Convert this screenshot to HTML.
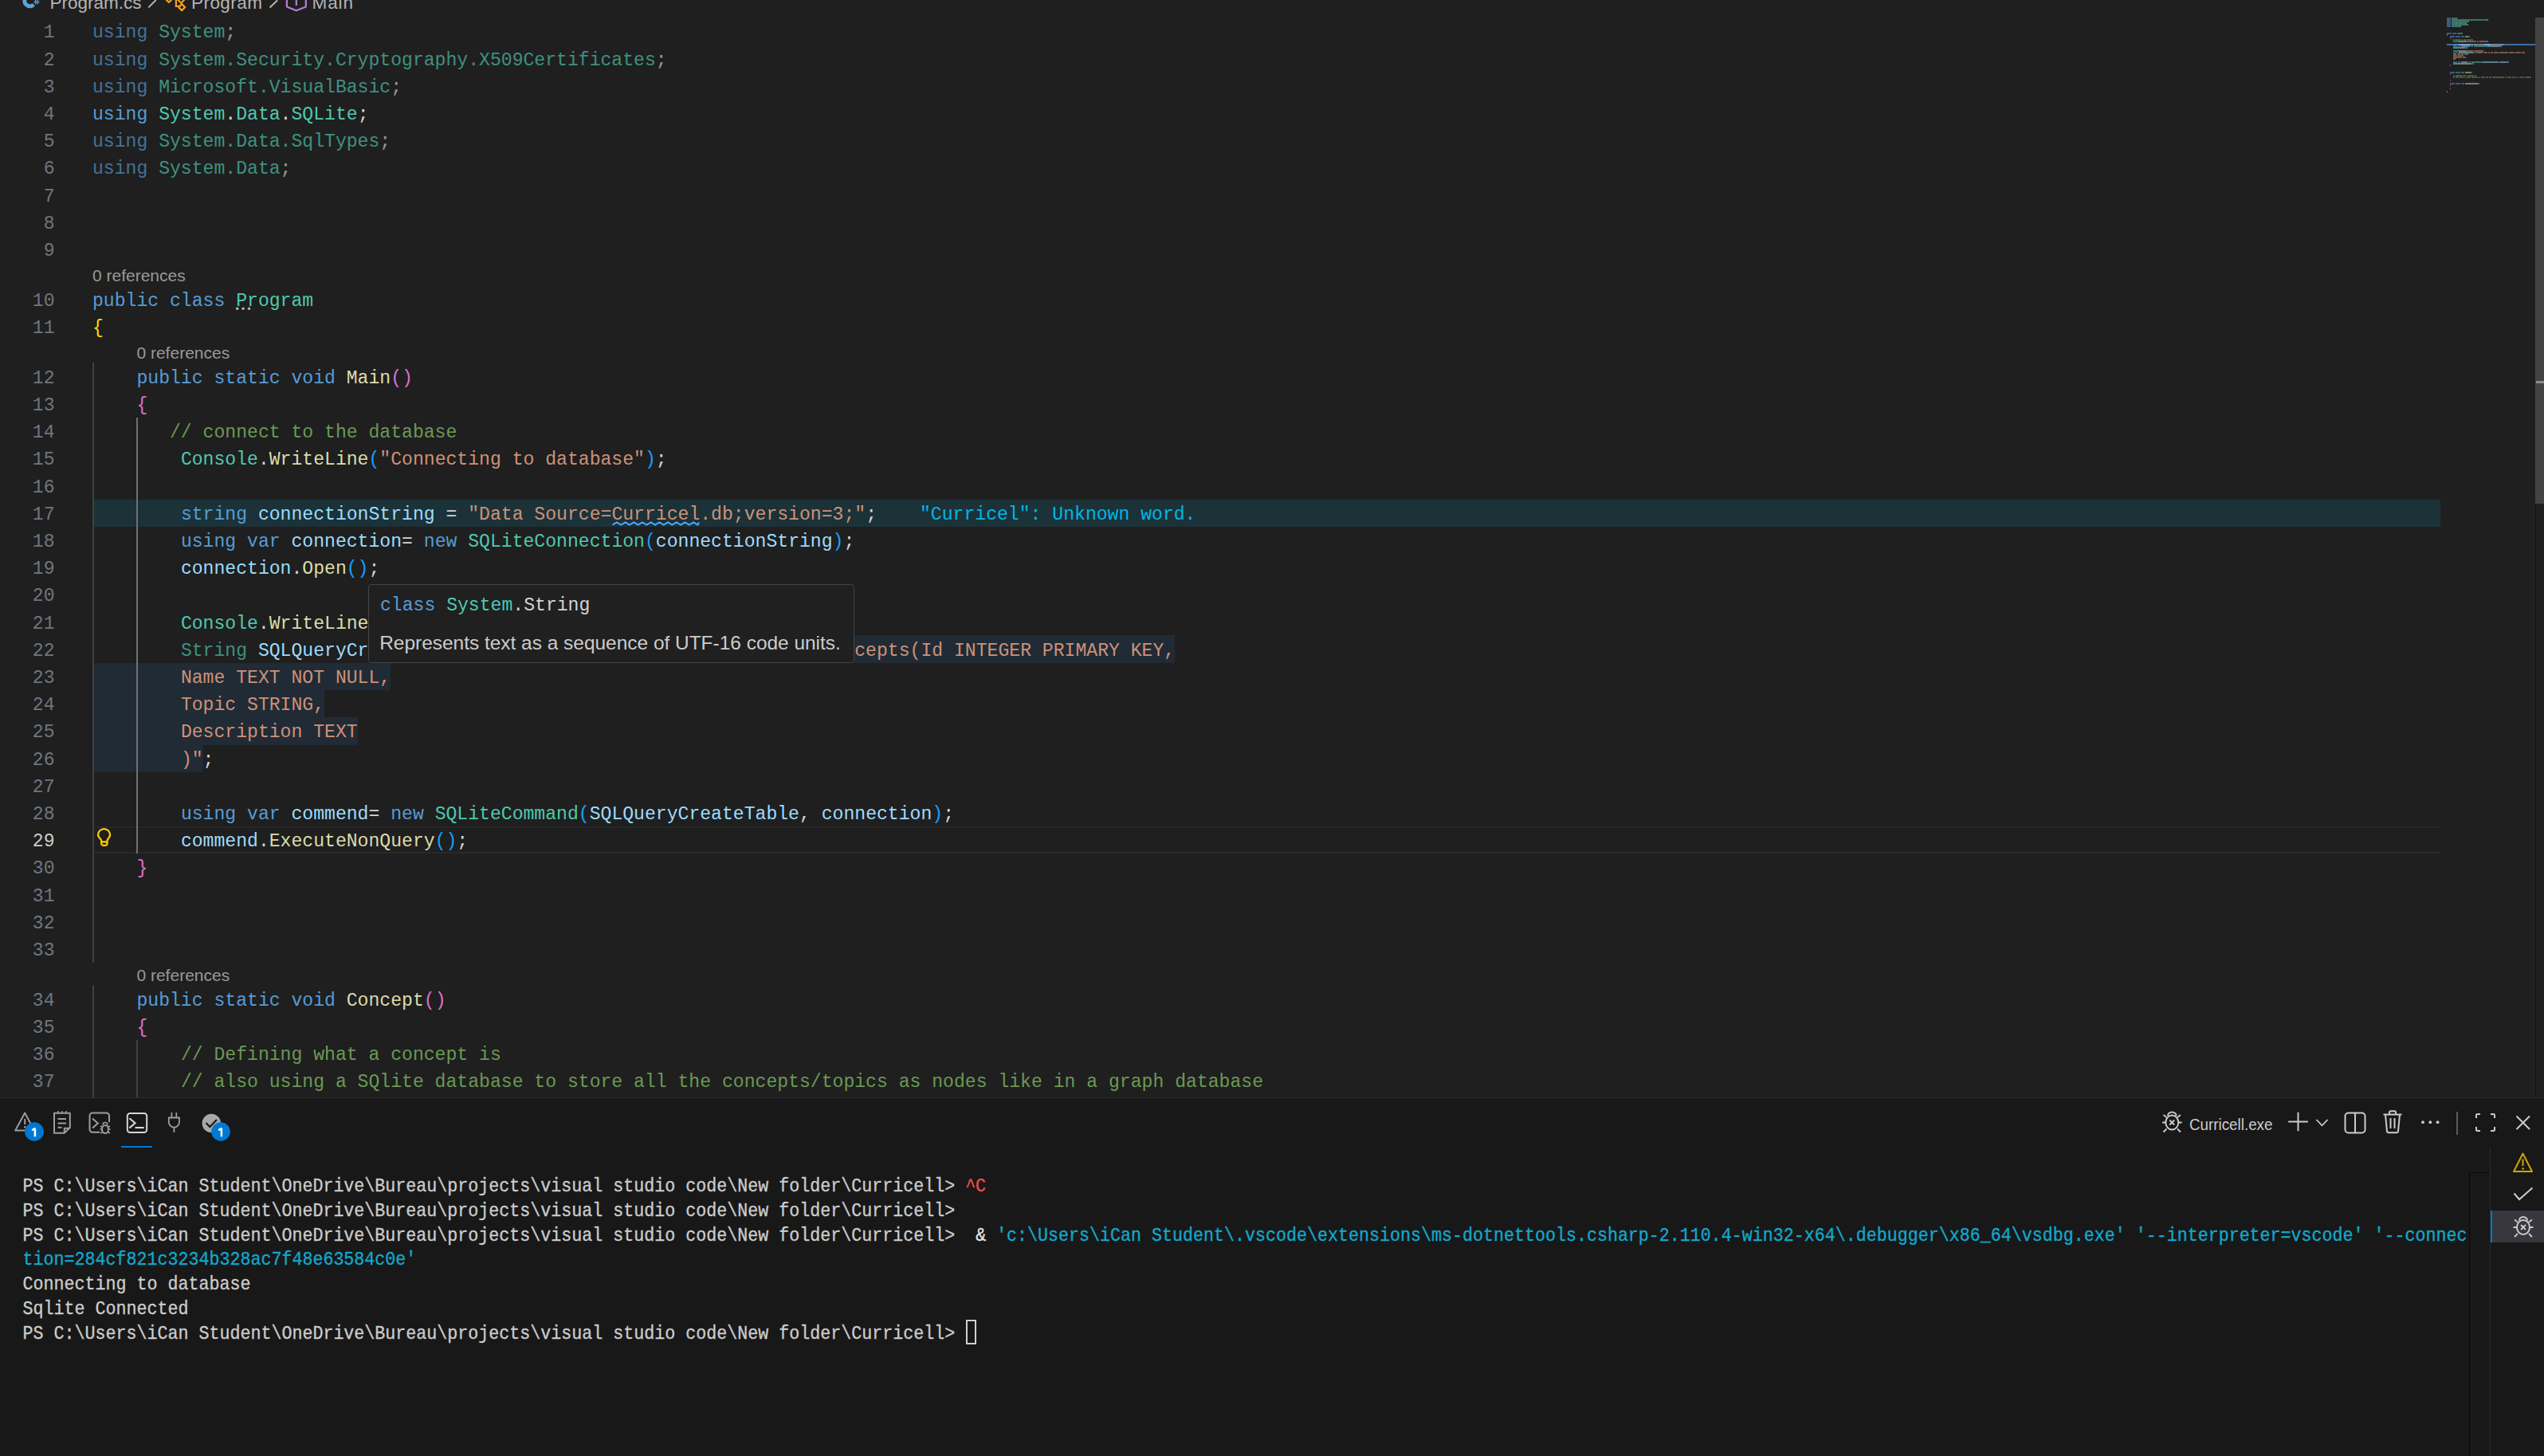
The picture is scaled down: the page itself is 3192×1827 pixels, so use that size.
<!DOCTYPE html><html><head><meta charset="utf-8"><style>
*{margin:0;padding:0;box-sizing:border-box}
html,body{width:3192px;height:1827px;overflow:hidden;background:#1F1F1F}
body{position:relative;font-family:"Liberation Sans",sans-serif}
.a{position:absolute}
svg{position:absolute;overflow:visible}
#ed{position:absolute;left:0;top:0;width:3192px;height:1377px;overflow:hidden;background:#1F1F1F}
.code{position:absolute;left:0;height:34.20px;line-height:34.20px;font-family:"Liberation Mono",monospace;font-size:23.10px;white-space:pre;}
.ln{position:absolute;left:0;width:68.5px;text-align:right;font-family:"Liberation Mono",monospace;font-size:23.10px;white-space:pre;color:#6E7681;line-height:34.20px;height:34.20px}
.cl{position:absolute;font-family:"Liberation Sans",sans-serif;font-size:21px;color:#999999;white-space:pre;line-height:28.6px}
.g{position:absolute;width:2px;background:#404040}
.term{position:absolute;left:28.5px;font-family:"Liberation Mono",monospace;font-size:21.66px;white-space:pre;color:#CCCCCC;line-height:30.8px;height:30.8px;transform:scaleY(1.08);transform-origin:0 20px;-webkit-text-stroke:0.3px}
.mm{position:absolute;height:2px;opacity:0.5}
</style></head><body>
<div id="ed">

<div class="a" style="left:116px;top:626.90px;width:2946px;height:34px;background:#1B3238"></div>
<div class="a" style="left:1071px;top:797.40px;width:403.28px;height:34.20px;background:#212B35"></div>
<div class="a" style="left:116px;top:831.60px;width:374.22px;height:34.70px;background:#212B35"></div>
<div class="a" style="left:116px;top:865.80px;width:291.06px;height:34.70px;background:#212B35"></div>
<div class="a" style="left:116px;top:900.00px;width:332.64px;height:34.70px;background:#212B35"></div>
<div class="a" style="left:116px;top:934.20px;width:138.60px;height:34.70px;background:#212B35"></div>
<div class="a" style="left:116px;top:1036.80px;width:2946px;height:34.20px;border-top:2px solid #282828;border-bottom:2px solid #282828"></div>
<div class="g" style="left:116.00px;top:455.40px;height:752.40px;background:#404040"></div>
<div class="g" style="left:116.00px;top:1236.40px;height:171.00px;background:#404040"></div>
<div class="g" style="left:171.00px;top:523.80px;height:547.20px;background:#707070"></div>
<div class="g" style="left:171.00px;top:1304.80px;height:102.60px;background:#404040"></div>
<div class="ln" style="top:24.30px;color:#6E7681">1</div>
<div class="ln" style="top:58.50px;color:#6E7681">2</div>
<div class="ln" style="top:92.70px;color:#6E7681">3</div>
<div class="ln" style="top:126.90px;color:#6E7681">4</div>
<div class="ln" style="top:161.10px;color:#6E7681">5</div>
<div class="ln" style="top:195.30px;color:#6E7681">6</div>
<div class="ln" style="top:229.50px;color:#6E7681">7</div>
<div class="ln" style="top:263.70px;color:#6E7681">8</div>
<div class="ln" style="top:297.90px;color:#6E7681">9</div>
<div class="ln" style="top:360.70px;color:#6E7681">10</div>
<div class="ln" style="top:394.90px;color:#6E7681">11</div>
<div class="ln" style="top:457.70px;color:#6E7681">12</div>
<div class="ln" style="top:491.90px;color:#6E7681">13</div>
<div class="ln" style="top:526.10px;color:#6E7681">14</div>
<div class="ln" style="top:560.30px;color:#6E7681">15</div>
<div class="ln" style="top:594.50px;color:#6E7681">16</div>
<div class="ln" style="top:628.70px;color:#6E7681">17</div>
<div class="ln" style="top:662.90px;color:#6E7681">18</div>
<div class="ln" style="top:697.10px;color:#6E7681">19</div>
<div class="ln" style="top:731.30px;color:#6E7681">20</div>
<div class="ln" style="top:765.50px;color:#6E7681">21</div>
<div class="ln" style="top:799.70px;color:#6E7681">22</div>
<div class="ln" style="top:833.90px;color:#6E7681">23</div>
<div class="ln" style="top:868.10px;color:#6E7681">24</div>
<div class="ln" style="top:902.30px;color:#6E7681">25</div>
<div class="ln" style="top:936.50px;color:#6E7681">26</div>
<div class="ln" style="top:970.70px;color:#6E7681">27</div>
<div class="ln" style="top:1004.90px;color:#6E7681">28</div>
<div class="ln" style="top:1039.10px;color:#CCCCCC">29</div>
<div class="ln" style="top:1073.30px;color:#6E7681">30</div>
<div class="ln" style="top:1107.50px;color:#6E7681">31</div>
<div class="ln" style="top:1141.70px;color:#6E7681">32</div>
<div class="ln" style="top:1175.90px;color:#6E7681">33</div>
<div class="ln" style="top:1238.70px;color:#6E7681">34</div>
<div class="ln" style="top:1272.90px;color:#6E7681">35</div>
<div class="ln" style="top:1307.10px;color:#6E7681">36</div>
<div class="ln" style="top:1341.30px;color:#6E7681">37</div>
<div class="ln" style="top:1375.50px;color:#6E7681">38</div>
<div class="code" style="left:116.00px;top:24.30px;opacity:0.667;"><span style="color:#569CD6">using</span><span style="color:#D4D4D4"> </span><span style="color:#4EC9B0">System</span><span style="color:#D4D4D4">;</span></div>
<div class="code" style="left:116.00px;top:58.50px;opacity:0.667;"><span style="color:#569CD6">using</span><span style="color:#D4D4D4"> </span><span style="color:#4EC9B0">System.Security.Cryptography.X509Certificates</span><span style="color:#D4D4D4">;</span></div>
<div class="code" style="left:116.00px;top:92.70px;opacity:0.667;"><span style="color:#569CD6">using</span><span style="color:#D4D4D4"> </span><span style="color:#4EC9B0">Microsoft.VisualBasic</span><span style="color:#D4D4D4">;</span></div>
<div class="code" style="left:116.00px;top:126.90px;"><span style="color:#569CD6">using</span><span style="color:#D4D4D4"> </span><span style="color:#4EC9B0">System</span><span style="color:#D4D4D4">.</span><span style="color:#4EC9B0">Data</span><span style="color:#D4D4D4">.</span><span style="color:#4EC9B0">SQLite</span><span style="color:#D4D4D4">;</span></div>
<div class="code" style="left:116.00px;top:161.10px;opacity:0.667;"><span style="color:#569CD6">using</span><span style="color:#D4D4D4"> </span><span style="color:#4EC9B0">System.Data.SqlTypes</span><span style="color:#D4D4D4">;</span></div>
<div class="code" style="left:116.00px;top:195.30px;opacity:0.667;"><span style="color:#569CD6">using</span><span style="color:#D4D4D4"> </span><span style="color:#4EC9B0">System.Data</span><span style="color:#D4D4D4">;</span></div>
<div class="code" style="left:116.00px;top:360.70px;"><span style="color:#569CD6">public</span><span style="color:#D4D4D4"> </span><span style="color:#569CD6">class</span><span style="color:#D4D4D4"> </span><span style="color:#4EC9B0">Program</span></div>
<div class="code" style="left:116.00px;top:394.90px;"><span style="color:#FFD700">{</span></div>
<div class="code" style="left:116.00px;top:457.70px;"><span style="color:#D4D4D4">    </span><span style="color:#569CD6">public</span><span style="color:#D4D4D4"> </span><span style="color:#569CD6">static</span><span style="color:#D4D4D4"> </span><span style="color:#569CD6">void</span><span style="color:#D4D4D4"> </span><span style="color:#DCDCAA">Main</span><span style="color:#DA70D6">()</span></div>
<div class="code" style="left:116.00px;top:491.90px;"><span style="color:#D4D4D4">    </span><span style="color:#DA70D6">{</span></div>
<div class="code" style="left:116.00px;top:526.10px;"><span style="color:#D4D4D4">       </span><span style="color:#6A9955">// connect to the database</span></div>
<div class="code" style="left:116.00px;top:560.30px;"><span style="color:#D4D4D4">        </span><span style="color:#4EC9B0">Console</span><span style="color:#D4D4D4">.</span><span style="color:#DCDCAA">WriteLine</span><span style="color:#179FFF">(</span><span style="color:#CE9178">&quot;Connecting to database&quot;</span><span style="color:#179FFF">)</span><span style="color:#D4D4D4">;</span></div>
<div class="code" style="left:116.00px;top:628.70px;"><span style="color:#D4D4D4">        </span><span style="color:#569CD6">string</span><span style="color:#D4D4D4"> </span><span style="color:#9CDCFE">connectionString</span><span style="color:#D4D4D4"> = </span><span style="color:#CE9178">&quot;Data Source=Curricel.db;version=3;&quot;</span><span style="color:#D4D4D4">;</span></div>
<div class="code" style="left:116.00px;top:662.90px;"><span style="color:#D4D4D4">        </span><span style="color:#569CD6">using</span><span style="color:#D4D4D4"> </span><span style="color:#569CD6">var</span><span style="color:#D4D4D4"> </span><span style="color:#9CDCFE">connection</span><span style="color:#D4D4D4">= </span><span style="color:#569CD6">new</span><span style="color:#D4D4D4"> </span><span style="color:#4EC9B0">SQLiteConnection</span><span style="color:#179FFF">(</span><span style="color:#9CDCFE">connectionString</span><span style="color:#179FFF">)</span><span style="color:#D4D4D4">;</span></div>
<div class="code" style="left:116.00px;top:697.10px;"><span style="color:#D4D4D4">        </span><span style="color:#9CDCFE">connection</span><span style="color:#D4D4D4">.</span><span style="color:#DCDCAA">Open</span><span style="color:#179FFF">()</span><span style="color:#D4D4D4">;</span></div>
<div class="code" style="left:116.00px;top:765.50px;"><span style="color:#D4D4D4">        </span><span style="color:#4EC9B0">Console</span><span style="color:#D4D4D4">.</span><span style="color:#DCDCAA">WriteLine</span><span style="color:#179FFF">(</span><span style="color:#CE9178">&quot;Sqlite Connected&quot;</span><span style="color:#179FFF">)</span><span style="color:#D4D4D4">;</span></div>
<div class="code" style="left:116.00px;top:799.70px;"><span style="color:#D4D4D4">        </span><span style="color:#3E9080">String</span><span style="color:#D4D4D4"> </span><span style="color:#9CDCFE">SQLQueryCreateTable</span><span style="color:#D4D4D4"> = </span><span style="color:#CE9178">@&quot;CREATE TABLE IF NOT EXISTS Concepts(Id INTEGER PRIMARY KEY,</span></div>
<div class="code" style="left:116.00px;top:833.90px;"><span style="color:#D4D4D4">        </span><span style="color:#CE9178">Name TEXT NOT NULL,</span></div>
<div class="code" style="left:116.00px;top:868.10px;"><span style="color:#D4D4D4">        </span><span style="color:#CE9178">Topic STRING,</span></div>
<div class="code" style="left:116.00px;top:902.30px;"><span style="color:#D4D4D4">        </span><span style="color:#CE9178">Description TEXT</span></div>
<div class="code" style="left:116.00px;top:936.50px;"><span style="color:#D4D4D4">        </span><span style="color:#CE9178">)&quot;</span><span style="color:#D4D4D4">;</span></div>
<div class="code" style="left:116.00px;top:1004.90px;"><span style="color:#D4D4D4">        </span><span style="color:#569CD6">using</span><span style="color:#D4D4D4"> </span><span style="color:#569CD6">var</span><span style="color:#D4D4D4"> </span><span style="color:#9CDCFE">commend</span><span style="color:#D4D4D4">= </span><span style="color:#569CD6">new</span><span style="color:#D4D4D4"> </span><span style="color:#4EC9B0">SQLiteCommand</span><span style="color:#179FFF">(</span><span style="color:#9CDCFE">SQLQueryCreateTable</span><span style="color:#D4D4D4">, </span><span style="color:#9CDCFE">connection</span><span style="color:#179FFF">)</span><span style="color:#D4D4D4">;</span></div>
<div class="code" style="left:116.00px;top:1039.10px;"><span style="color:#D4D4D4">        </span><span style="color:#9CDCFE">commend</span><span style="color:#D4D4D4">.</span><span style="color:#DCDCAA">ExecuteNonQuery</span><span style="color:#179FFF">()</span><span style="color:#D4D4D4">;</span></div>
<div class="code" style="left:116.00px;top:1073.30px;"><span style="color:#D4D4D4">    </span><span style="color:#DA70D6">}</span></div>
<div class="code" style="left:116.00px;top:1238.70px;"><span style="color:#D4D4D4">    </span><span style="color:#569CD6">public</span><span style="color:#D4D4D4"> </span><span style="color:#569CD6">static</span><span style="color:#D4D4D4"> </span><span style="color:#569CD6">void</span><span style="color:#D4D4D4"> </span><span style="color:#DCDCAA">Concept</span><span style="color:#DA70D6">()</span></div>
<div class="code" style="left:116.00px;top:1272.90px;"><span style="color:#D4D4D4">    </span><span style="color:#DA70D6">{</span></div>
<div class="code" style="left:116.00px;top:1307.10px;"><span style="color:#D4D4D4">        </span><span style="color:#6A9955">// Defining what a concept is</span></div>
<div class="code" style="left:116.00px;top:1341.30px;"><span style="color:#D4D4D4">        </span><span style="color:#6A9955">// also using a SQlite database to store all the concepts/topics as nodes like in a graph database</span></div>
<div class="cl" style="left:116.00px;top:331.80px">0 references</div>
<div class="cl" style="left:171.44px;top:428.80px">0 references</div>
<div class="cl" style="left:171.44px;top:1209.80px">0 references</div>
<div class="code" style="left:1154.00px;top:628.70px;color:#00B7E4">"Curricel": Unknown word.</div>
<svg style="left:0;top:0" width="3192" height="1377"><path d="M768.5 658.6 L773.9 655.4 L779.2 658.6 L784.6 655.4 L789.9 658.6 L795.3 655.4 L800.6 658.6 L806.0 655.4 L811.3 658.6 L816.7 655.4 L822.0 658.6 L827.4 655.4 L832.7 658.6 L838.1 655.4 L843.4 658.6 L848.8 655.4 L854.1 658.6 L859.5 655.4 L864.8 658.6 L870.2 655.4 L875.5 658.6 L877.0 655.4" fill="none" stroke="#4FA6FF" stroke-width="1.9"/></svg>
<svg style="left:0;top:0" width="3192" height="1377"><circle cx="297.7" cy="387.2" r="1.8" fill="#B0B0B0"/><circle cx="305.1" cy="387.2" r="1.8" fill="#B0B0B0"/><circle cx="312.5" cy="387.2" r="1.8" fill="#B0B0B0"/></svg>
<svg style="left:110px;top:1030px" width="40" height="40"><path d="M17.2 26.3 V25 C17.2 22.6 13 21 13 17.65 A7.55 7.55 0 0 1 28.1 17.65 C28.1 21 24.5 22.6 24.5 25 V26.3" fill="none" stroke="#FFCC00" stroke-width="2.3" stroke-linejoin="round"/><path d="M17.2 26.3 H24.5 V28.5 A2.4 2.4 0 0 1 22.1 30.9 H19.6 A2.4 2.4 0 0 1 17.2 28.5 Z" fill="none" stroke="#FFCC00" stroke-width="2.3" stroke-linejoin="round"/></svg>
<div class="a" style="left:62.5px;top:-9px;font-size:22.5px;color:#B4B4B4;white-space:pre;line-height:26px;letter-spacing:0.00px">Program.cs</div>
<div class="a" style="left:240.0px;top:-9px;font-size:22.5px;color:#B4B4B4;white-space:pre;line-height:26px;letter-spacing:0.45px">Program</div>
<div class="a" style="left:391.5px;top:-9px;font-size:22.5px;color:#B4B4B4;white-space:pre;line-height:26px;letter-spacing:0.90px">Main</div>
<svg style="left:0;top:0" width="460" height="22"><path d="M42.4 5.8 A6.8 6.8 0 1 1 42.4 -3.8" fill="none" stroke="#5AA5D3" stroke-width="5"/><path d="M44.6 -3 V5.5 M47.2 -3 V5.5 M42.5 -0.3 H49.5 M42.5 2.6 H49.5" stroke="#5AA5D3" stroke-width="1.3"/><path d="M186.3 9.4 L195.7 0 M338.5 9.4 L348.2 0.3" stroke="#B4B4B4" stroke-width="2"/><path d="M211.8 -5 L215.8 -1 L211.8 3 L207.8 -1 Z M227.2 -4.2 L231.2 -0.2 L227.2 3.8 L223.2 -0.2 Z M228.1 5.1 L232.1 9.1 L228.1 13.1 L224.1 9.1 Z" fill="none" stroke="#EE9D28" stroke-width="2.2" stroke-linejoin="round"/><path d="M220.9 -2 V7.9 H225" fill="none" stroke="#EE9D28" stroke-width="2.2"/><path d="M359.9 -2 V8.5 L371.8 13.3 L383.8 8.5 V-2 M371.8 -2 V7" fill="none" stroke="#B180D7" stroke-width="2.2" stroke-linejoin="round"/></svg>
<div class="a" style="left:3070px;top:54.9px;width:111px;height:2.2px;background:#3A6EA5"></div>
<div class="mm" style="left:3070px;top:22.0px;width:5px;background:#569CD6"></div>
<div class="mm" style="left:3076px;top:22.0px;width:6px;background:#4EC9B0"></div>
<div class="mm" style="left:3082px;top:22.0px;width:1px;background:#D4D4D4"></div>
<div class="mm" style="left:3070px;top:24.0px;width:5px;background:#569CD6"></div>
<div class="mm" style="left:3076px;top:24.0px;width:45px;background:#4EC9B0"></div>
<div class="mm" style="left:3121px;top:24.0px;width:1px;background:#D4D4D4"></div>
<div class="mm" style="left:3070px;top:26.0px;width:5px;background:#569CD6"></div>
<div class="mm" style="left:3076px;top:26.0px;width:21px;background:#4EC9B0"></div>
<div class="mm" style="left:3097px;top:26.0px;width:1px;background:#D4D4D4"></div>
<div class="mm" style="left:3070px;top:28.0px;width:5px;background:#569CD6"></div>
<div class="mm" style="left:3076px;top:28.0px;width:6px;background:#4EC9B0"></div>
<div class="mm" style="left:3082px;top:28.0px;width:1px;background:#D4D4D4"></div>
<div class="mm" style="left:3083px;top:28.0px;width:4px;background:#4EC9B0"></div>
<div class="mm" style="left:3087px;top:28.0px;width:1px;background:#D4D4D4"></div>
<div class="mm" style="left:3088px;top:28.0px;width:6px;background:#4EC9B0"></div>
<div class="mm" style="left:3094px;top:28.0px;width:1px;background:#D4D4D4"></div>
<div class="mm" style="left:3070px;top:30.0px;width:5px;background:#569CD6"></div>
<div class="mm" style="left:3076px;top:30.0px;width:20px;background:#4EC9B0"></div>
<div class="mm" style="left:3096px;top:30.0px;width:1px;background:#D4D4D4"></div>
<div class="mm" style="left:3070px;top:32.0px;width:5px;background:#569CD6"></div>
<div class="mm" style="left:3076px;top:32.0px;width:11px;background:#4EC9B0"></div>
<div class="mm" style="left:3087px;top:32.0px;width:1px;background:#D4D4D4"></div>
<div class="mm" style="left:3070px;top:41.0px;width:6px;background:#569CD6"></div>
<div class="mm" style="left:3077px;top:41.0px;width:5px;background:#569CD6"></div>
<div class="mm" style="left:3083px;top:41.0px;width:7px;background:#4EC9B0"></div>
<div class="mm" style="left:3070px;top:43.0px;width:1px;background:#FFD700"></div>
<div class="mm" style="left:3074px;top:45.0px;width:6px;background:#569CD6"></div>
<div class="mm" style="left:3081px;top:45.0px;width:6px;background:#569CD6"></div>
<div class="mm" style="left:3088px;top:45.0px;width:4px;background:#569CD6"></div>
<div class="mm" style="left:3093px;top:45.0px;width:4px;background:#DCDCAA"></div>
<div class="mm" style="left:3097px;top:45.0px;width:2px;background:#DA70D6"></div>
<div class="mm" style="left:3074px;top:47.0px;width:1px;background:#DA70D6"></div>
<div class="mm" style="left:3077px;top:49.0px;width:2px;background:#6A9955"></div>
<div class="mm" style="left:3080px;top:49.0px;width:7px;background:#6A9955"></div>
<div class="mm" style="left:3088px;top:49.0px;width:2px;background:#6A9955"></div>
<div class="mm" style="left:3091px;top:49.0px;width:3px;background:#6A9955"></div>
<div class="mm" style="left:3095px;top:49.0px;width:8px;background:#6A9955"></div>
<div class="mm" style="left:3078px;top:51.0px;width:7px;background:#4EC9B0"></div>
<div class="mm" style="left:3085px;top:51.0px;width:1px;background:#D4D4D4"></div>
<div class="mm" style="left:3086px;top:51.0px;width:9px;background:#DCDCAA"></div>
<div class="mm" style="left:3095px;top:51.0px;width:1px;background:#179FFF"></div>
<div class="mm" style="left:3096px;top:51.0px;width:11px;background:#CE9178"></div>
<div class="mm" style="left:3108px;top:51.0px;width:2px;background:#CE9178"></div>
<div class="mm" style="left:3111px;top:51.0px;width:9px;background:#CE9178"></div>
<div class="mm" style="left:3120px;top:51.0px;width:1px;background:#179FFF"></div>
<div class="mm" style="left:3121px;top:51.0px;width:1px;background:#D4D4D4"></div>
<div class="mm" style="left:3078px;top:55.0px;width:6px;background:#569CD6"></div>
<div class="mm" style="left:3085px;top:55.0px;width:16px;background:#9CDCFE"></div>
<div class="mm" style="left:3102px;top:55.0px;width:1px;background:#D4D4D4"></div>
<div class="mm" style="left:3104px;top:55.0px;width:5px;background:#CE9178"></div>
<div class="mm" style="left:3110px;top:55.0px;width:30px;background:#CE9178"></div>
<div class="mm" style="left:3140px;top:55.0px;width:1px;background:#D4D4D4"></div>
<div class="mm" style="left:3078px;top:57.0px;width:5px;background:#569CD6"></div>
<div class="mm" style="left:3084px;top:57.0px;width:3px;background:#569CD6"></div>
<div class="mm" style="left:3088px;top:57.0px;width:10px;background:#9CDCFE"></div>
<div class="mm" style="left:3098px;top:57.0px;width:1px;background:#D4D4D4"></div>
<div class="mm" style="left:3100px;top:57.0px;width:3px;background:#569CD6"></div>
<div class="mm" style="left:3104px;top:57.0px;width:16px;background:#4EC9B0"></div>
<div class="mm" style="left:3120px;top:57.0px;width:1px;background:#179FFF"></div>
<div class="mm" style="left:3121px;top:57.0px;width:16px;background:#9CDCFE"></div>
<div class="mm" style="left:3137px;top:57.0px;width:1px;background:#179FFF"></div>
<div class="mm" style="left:3138px;top:57.0px;width:1px;background:#D4D4D4"></div>
<div class="mm" style="left:3078px;top:59.0px;width:10px;background:#9CDCFE"></div>
<div class="mm" style="left:3088px;top:59.0px;width:1px;background:#D4D4D4"></div>
<div class="mm" style="left:3089px;top:59.0px;width:4px;background:#DCDCAA"></div>
<div class="mm" style="left:3093px;top:59.0px;width:2px;background:#179FFF"></div>
<div class="mm" style="left:3095px;top:59.0px;width:1px;background:#D4D4D4"></div>
<div class="mm" style="left:3078px;top:63.0px;width:7px;background:#4EC9B0"></div>
<div class="mm" style="left:3085px;top:63.0px;width:1px;background:#D4D4D4"></div>
<div class="mm" style="left:3086px;top:63.0px;width:9px;background:#DCDCAA"></div>
<div class="mm" style="left:3095px;top:63.0px;width:1px;background:#179FFF"></div>
<div class="mm" style="left:3096px;top:63.0px;width:7px;background:#CE9178"></div>
<div class="mm" style="left:3104px;top:63.0px;width:10px;background:#CE9178"></div>
<div class="mm" style="left:3114px;top:63.0px;width:1px;background:#179FFF"></div>
<div class="mm" style="left:3115px;top:63.0px;width:1px;background:#D4D4D4"></div>
<div class="mm" style="left:3078px;top:65.0px;width:6px;background:#3E9080"></div>
<div class="mm" style="left:3085px;top:65.0px;width:19px;background:#9CDCFE"></div>
<div class="mm" style="left:3105px;top:65.0px;width:1px;background:#D4D4D4"></div>
<div class="mm" style="left:3107px;top:65.0px;width:8px;background:#CE9178"></div>
<div class="mm" style="left:3116px;top:65.0px;width:5px;background:#CE9178"></div>
<div class="mm" style="left:3122px;top:65.0px;width:2px;background:#CE9178"></div>
<div class="mm" style="left:3125px;top:65.0px;width:3px;background:#CE9178"></div>
<div class="mm" style="left:3129px;top:65.0px;width:6px;background:#CE9178"></div>
<div class="mm" style="left:3136px;top:65.0px;width:11px;background:#CE9178"></div>
<div class="mm" style="left:3148px;top:65.0px;width:7px;background:#CE9178"></div>
<div class="mm" style="left:3156px;top:65.0px;width:7px;background:#CE9178"></div>
<div class="mm" style="left:3164px;top:65.0px;width:4px;background:#CE9178"></div>
<div class="mm" style="left:3078px;top:67.0px;width:4px;background:#CE9178"></div>
<div class="mm" style="left:3083px;top:67.0px;width:4px;background:#CE9178"></div>
<div class="mm" style="left:3088px;top:67.0px;width:3px;background:#CE9178"></div>
<div class="mm" style="left:3092px;top:67.0px;width:5px;background:#CE9178"></div>
<div class="mm" style="left:3078px;top:69.0px;width:5px;background:#CE9178"></div>
<div class="mm" style="left:3084px;top:69.0px;width:7px;background:#CE9178"></div>
<div class="mm" style="left:3078px;top:71.0px;width:11px;background:#CE9178"></div>
<div class="mm" style="left:3090px;top:71.0px;width:4px;background:#CE9178"></div>
<div class="mm" style="left:3078px;top:73.0px;width:2px;background:#CE9178"></div>
<div class="mm" style="left:3080px;top:73.0px;width:1px;background:#D4D4D4"></div>
<div class="mm" style="left:3078px;top:77.0px;width:5px;background:#569CD6"></div>
<div class="mm" style="left:3084px;top:77.0px;width:3px;background:#569CD6"></div>
<div class="mm" style="left:3088px;top:77.0px;width:7px;background:#9CDCFE"></div>
<div class="mm" style="left:3095px;top:77.0px;width:1px;background:#D4D4D4"></div>
<div class="mm" style="left:3097px;top:77.0px;width:3px;background:#569CD6"></div>
<div class="mm" style="left:3101px;top:77.0px;width:13px;background:#4EC9B0"></div>
<div class="mm" style="left:3114px;top:77.0px;width:1px;background:#179FFF"></div>
<div class="mm" style="left:3115px;top:77.0px;width:19px;background:#9CDCFE"></div>
<div class="mm" style="left:3134px;top:77.0px;width:1px;background:#D4D4D4"></div>
<div class="mm" style="left:3136px;top:77.0px;width:10px;background:#9CDCFE"></div>
<div class="mm" style="left:3146px;top:77.0px;width:1px;background:#179FFF"></div>
<div class="mm" style="left:3147px;top:77.0px;width:1px;background:#D4D4D4"></div>
<div class="mm" style="left:3078px;top:79.0px;width:7px;background:#9CDCFE"></div>
<div class="mm" style="left:3085px;top:79.0px;width:1px;background:#D4D4D4"></div>
<div class="mm" style="left:3086px;top:79.0px;width:15px;background:#DCDCAA"></div>
<div class="mm" style="left:3101px;top:79.0px;width:2px;background:#179FFF"></div>
<div class="mm" style="left:3103px;top:79.0px;width:1px;background:#D4D4D4"></div>
<div class="mm" style="left:3074px;top:81.0px;width:1px;background:#DA70D6"></div>
<div class="mm" style="left:3074px;top:90.0px;width:6px;background:#569CD6"></div>
<div class="mm" style="left:3081px;top:90.0px;width:6px;background:#569CD6"></div>
<div class="mm" style="left:3088px;top:90.0px;width:4px;background:#569CD6"></div>
<div class="mm" style="left:3093px;top:90.0px;width:7px;background:#DCDCAA"></div>
<div class="mm" style="left:3100px;top:90.0px;width:2px;background:#DA70D6"></div>
<div class="mm" style="left:3074px;top:92.0px;width:1px;background:#DA70D6"></div>
<div class="mm" style="left:3078px;top:94.0px;width:2px;background:#6A9955"></div>
<div class="mm" style="left:3081px;top:94.0px;width:8px;background:#6A9955"></div>
<div class="mm" style="left:3090px;top:94.0px;width:4px;background:#6A9955"></div>
<div class="mm" style="left:3095px;top:94.0px;width:1px;background:#6A9955"></div>
<div class="mm" style="left:3097px;top:94.0px;width:7px;background:#6A9955"></div>
<div class="mm" style="left:3105px;top:94.0px;width:2px;background:#6A9955"></div>
<div class="mm" style="left:3078px;top:96.0px;width:2px;background:#6A9955"></div>
<div class="mm" style="left:3081px;top:96.0px;width:4px;background:#6A9955"></div>
<div class="mm" style="left:3086px;top:96.0px;width:5px;background:#6A9955"></div>
<div class="mm" style="left:3092px;top:96.0px;width:1px;background:#6A9955"></div>
<div class="mm" style="left:3094px;top:96.0px;width:6px;background:#6A9955"></div>
<div class="mm" style="left:3101px;top:96.0px;width:8px;background:#6A9955"></div>
<div class="mm" style="left:3110px;top:96.0px;width:2px;background:#6A9955"></div>
<div class="mm" style="left:3113px;top:96.0px;width:5px;background:#6A9955"></div>
<div class="mm" style="left:3119px;top:96.0px;width:3px;background:#6A9955"></div>
<div class="mm" style="left:3123px;top:96.0px;width:3px;background:#6A9955"></div>
<div class="mm" style="left:3127px;top:96.0px;width:15px;background:#6A9955"></div>
<div class="mm" style="left:3143px;top:96.0px;width:2px;background:#6A9955"></div>
<div class="mm" style="left:3146px;top:96.0px;width:5px;background:#6A9955"></div>
<div class="mm" style="left:3152px;top:96.0px;width:4px;background:#6A9955"></div>
<div class="mm" style="left:3157px;top:96.0px;width:2px;background:#6A9955"></div>
<div class="mm" style="left:3160px;top:96.0px;width:1px;background:#6A9955"></div>
<div class="mm" style="left:3162px;top:96.0px;width:5px;background:#6A9955"></div>
<div class="mm" style="left:3168px;top:96.0px;width:8px;background:#6A9955"></div>
<div class="mm" style="left:3074px;top:100.0px;width:1px;background:#DA70D6"></div>
<div class="mm" style="left:3074px;top:104.0px;width:6px;background:#569CD6"></div>
<div class="mm" style="left:3081px;top:104.0px;width:6px;background:#569CD6"></div>
<div class="mm" style="left:3088px;top:104.0px;width:4px;background:#569CD6"></div>
<div class="mm" style="left:3093px;top:104.0px;width:16px;background:#DCDCAA"></div>
<div class="mm" style="left:3109px;top:104.0px;width:2px;background:#DA70D6"></div>
<div class="mm" style="left:3074px;top:106.0px;width:1px;background:#DA70D6"></div>
<div class="mm" style="left:3074px;top:110.0px;width:1px;background:#DA70D6"></div>
<div class="mm" style="left:3070px;top:114.0px;width:1px;background:#FFD700"></div>
<div class="a" style="left:3117px;top:54.9px;width:8px;height:2.2px;background:#6FA8E8"></div>
<div class="a" style="left:3181px;top:22px;width:11px;height:610px;background:#434343"></div>
<div class="a" style="left:3181px;top:632px;width:1px;height:745px;background:#111215"></div>
<div class="a" style="left:3182px;top:478px;width:10px;height:3px;background:#8B8B8B"></div>
<div class="a" style="left:461.5px;top:733px;width:610px;height:98.5px;background:#202020;border:1.8px solid #454545;border-radius:3.5px"></div>
<div class="code" style="left:477px;top:743.3px;color:#D4D4D4"><span style="color:#569CD6">class</span> <span style="color:#4EC9B0">System</span>.String</div>
<div class="a" style="left:476.2px;top:791.8px;font-size:24.45px;line-height:30px;color:#CCCCCC;white-space:pre">Represents text as a sequence of UTF-16 code units.</div>
</div>
<div class="a" style="left:0;top:1377px;width:3192px;height:450px;background:#181818"></div>
<div class="a" style="left:0;top:1377px;width:3192px;height:1.4px;background:#2B2B2B"></div>
<svg style="left:0;top:1380px" width="60" height="60"><path d="M31.2 16.5 L19.2 38.5 H43 Z" fill="none" stroke="#9D9D9D" stroke-width="2" stroke-linejoin="round"/><path d="M31.2 24 V31" stroke="#9D9D9D" stroke-width="2"/><circle cx="31.2" cy="34.3" r="1.2" fill="#9D9D9D"/></svg>
<svg style="left:60px;top:1385px" width="40" height="45"><path d="M8 11.8 h19.8 v18 l-7 7 h-12.8 z" fill="none" stroke="#9D9D9D" stroke-width="2" stroke-linejoin="round"/><path d="M20.8 36.8 v-6 h7" fill="none" stroke="#9D9D9D" stroke-width="2"/><path d="M12.5 19 h10.5 M12.5 24.5 h10.5 M12.5 29.7 h5" stroke="#9D9D9D" stroke-width="2"/><path d="M13 9 v3 M18 9 v3 M23 9 v3" stroke="#9D9D9D" stroke-width="1.6"/></svg>
<svg style="left:100px;top:1385px" width="50" height="45"><path d="M25 35.8 H16 a3.5 3.5 0 0 1 -3.5 -3.5 V15 a3.5 3.5 0 0 1 3.5 -3.5 H33.5 a3.5 3.5 0 0 1 3.5 3.5 V23" fill="none" stroke="#9D9D9D" stroke-width="2"/><path d="M16 18.4 L22.8 24.5 L16 30.5" fill="none" stroke="#9D9D9D" stroke-width="2"/><ellipse cx="32" cy="32" rx="4" ry="5" fill="none" stroke="#9D9D9D" stroke-width="2"/><path d="M29 26.5 a3 3 0 0 1 6 0 M26 28 l2.5 1.5 M38 28 l-2.5 1.5 M25.5 32 h2.5 M36 32 h2.5 M26 37 l2.5 -1.5 M38 37 l-2.5 -1.5" fill="none" stroke="#9D9D9D" stroke-width="1.6"/></svg>
<svg style="left:150px;top:1385px" width="45" height="45"><rect x="9.8" y="11.9" width="24.4" height="24.1" rx="3.5" fill="none" stroke="#D6D6D6" stroke-width="2"/><path d="M12.4 18.3 L19.5 24.2 L12.4 30.4" fill="none" stroke="#D6D6D6" stroke-width="2.1"/><path d="M19.5 30 H30.7" stroke="#D6D6D6" stroke-width="2.1"/></svg>
<div class="a" style="left:152px;top:1437.5px;width:39px;height:2px;background:#0078D4"></div>
<svg style="left:200px;top:1385px" width="40" height="45"><path d="M15.4 11 V17.5 M21.3 11 V17.5" stroke="#9D9D9D" stroke-width="1.8"/><path d="M11.8 17.5 H25 V23 a6.6 6.6 0 0 1 -13.2 0 Z" fill="none" stroke="#9D9D9D" stroke-width="1.8"/><path d="M18.4 29.6 V36" stroke="#9D9D9D" stroke-width="1.8"/></svg>
<svg style="left:240px;top:1385px" width="60" height="50"><circle cx="25.3" cy="24.5" r="11.8" fill="#A8A8A8"/><path d="M18.5 24 L23.3 29 L32 20" fill="none" stroke="#181818" stroke-width="2.2"/></svg>
<svg style="left:31.2px;top:1407.5px" width="24" height="24"><circle cx="12" cy="12" r="11.8" fill="#0078D4"/><path d="M9.2 10.2 L12.9 7.9 V18.2" fill="none" stroke="#FFFFFF" stroke-width="2.5" stroke-linejoin="bevel"/></svg>
<svg style="left:264.5px;top:1407.5px" width="24" height="24"><circle cx="12" cy="12" r="11.8" fill="#0078D4"/><path d="M9.2 10.2 L12.9 7.9 V18.2" fill="none" stroke="#FFFFFF" stroke-width="2.5" stroke-linejoin="bevel"/></svg>
<svg style="left:2705px;top:1385px" width="40" height="45"><ellipse cx="20.3" cy="23.5" rx="8" ry="9" fill="none" stroke="#CCCCCC" stroke-width="2"/><path d="M15 15 a5.3 4.5 0 0 1 10.6 0" fill="none" stroke="#CCCCCC" stroke-width="2"/><path d="M17.3 20.5 l6 6 M23.3 20.5 l-6 6" stroke="#CCCCCC" stroke-width="1.8"/><path d="M8 23.5 h4.3 M28.3 23.5 h4.3 M9.5 14 l4 3 M31 14 l-4 3 M9.5 35.5 l4 -4 M31 35.5 l-4 -4" stroke="#CCCCCC" stroke-width="1.8"/></svg>
<div class="a" style="left:2747px;top:1397px;font-size:21px;line-height:28px;color:#CCCCCC;white-space:pre;transform:scaleX(0.895);transform-origin:0 0">Curricell.exe</div>
<svg style="left:2860px;top:1385px" width="70" height="45"><path d="M23.5 10.8 V34.3 M11.2 22.6 H35.8" stroke="#CCCCCC" stroke-width="2"/><path d="M46.5 20 L53.5 27.3 L60.5 20" fill="none" stroke="#CCCCCC" stroke-width="1.8"/></svg>
<svg style="left:2935px;top:1385px" width="40" height="45"><rect x="7.5" y="11.5" width="25" height="25" rx="4" fill="none" stroke="#CCCCCC" stroke-width="2"/><path d="M20 11.5 V36.5" stroke="#CCCCCC" stroke-width="2"/></svg>
<svg style="left:2985px;top:1385px" width="40" height="45"><path d="M5.5 13.5 H28.5 M13 13.5 V10.8 a1.5 1.5 0 0 1 1.5 -1.5 h5 a1.5 1.5 0 0 1 1.5 1.5 V13.5" fill="none" stroke="#CCCCCC" stroke-width="2"/><path d="M8 13.5 L10 34.5 a2 2 0 0 0 2 1.8 H22 a2 2 0 0 0 2 -1.8 L26 13.5" fill="none" stroke="#CCCCCC" stroke-width="2"/><path d="M14.5 18 V31 M19.5 18 V31" stroke="#CCCCCC" stroke-width="2"/></svg>
<svg style="left:3030px;top:1385px" width="40" height="45"><circle cx="10.0" cy="23.2" r="1.9" fill="#CCCCCC"/><circle cx="19.3" cy="23.2" r="1.9" fill="#CCCCCC"/><circle cx="28.6" cy="23.2" r="1.9" fill="#CCCCCC"/></svg>
<div class="a" style="left:3082px;top:1395px;width:2px;height:29px;background:#5A5A5A"></div>
<svg style="left:3100px;top:1385px" width="40" height="45"><path d="M7 18 V14.5 a1.5 1.5 0 0 1 1.5 -1.5 H12 M25 13 H28.5 a1.5 1.5 0 0 1 1.5 1.5 V18 M30 29 V32.5 a1.5 1.5 0 0 1 -1.5 1.5 H25 M12 34 H8.5 a1.5 1.5 0 0 1 -1.5 -1.5 V29" fill="none" stroke="#CCCCCC" stroke-width="2"/></svg>
<svg style="left:3150px;top:1385px" width="40" height="45"><path d="M7.5 15.5 L24 32 M24 15.5 L7.5 32" stroke="#CCCCCC" stroke-width="2"/></svg>
<div class="term" style="top:1475.0px"><span style="color:#CCCCCC">PS C:\Users\iCan Student\OneDrive\Bureau\projects\visual studio code\New folder\Curricell&gt; </span><span style="color:#F14C4C">^C</span></div>
<div class="term" style="top:1505.8px"><span style="color:#CCCCCC">PS C:\Users\iCan Student\OneDrive\Bureau\projects\visual studio code\New folder\Curricell&gt; </span></div>
<div class="term" style="top:1536.6px"><span style="color:#CCCCCC">PS C:\Users\iCan Student\OneDrive\Bureau\projects\visual studio code\New folder\Curricell&gt; </span><span style="color:#CCCCCC"> </span><span style="color:#E5E5E5">&amp;</span><span style="color:#CCCCCC"> </span><span style="color:#11A8CD">&#x27;c:\Users\iCan Student\.vscode\extensions\ms-dotnettools.csharp-2.110.4-win32-x64\.debugger\x86_64\vsdbg.exe&#x27; &#x27;--interpreter=vscode&#x27; &#x27;--connec</span></div>
<div class="term" style="top:1567.4px"><span style="color:#11A8CD">tion=284cf821c3234b328ac7f48e63584c0e&#x27;</span></div>
<div class="term" style="top:1598.2px"><span style="color:#CCCCCC">Connecting to database</span></div>
<div class="term" style="top:1629.0px"><span style="color:#CCCCCC">Sqlite Connected</span></div>
<div class="term" style="top:1659.8px"><span style="color:#CCCCCC">PS C:\Users\iCan Student\OneDrive\Bureau\projects\visual studio code\New folder\Curricell&gt; </span></div>
<div class="a" style="left:1211.5px;top:1656px;width:13.5px;height:31px;border:2.2px solid #D0D0D0"></div>
<div class="a" style="left:3098px;top:1471px;width:1px;height:356px;background:#080808"></div>
<div class="a" style="left:3098px;top:1471px;width:26px;height:1px;background:#080808"></div>
<div class="a" style="left:3123.5px;top:1440px;width:1.8px;height:387px;background:#2B2B2B"></div>
<div class="a" style="left:3125px;top:1518.8px;width:67px;height:39.8px;background:#37373D"></div>
<div class="a" style="left:3124.5px;top:1518.8px;width:2.5px;height:39.8px;background:#0078D4"></div>
<svg style="left:3145px;top:1440px" width="40" height="40"><path d="M20.5 7.5 L9 30 H32 Z" fill="none" stroke="#CCA700" stroke-width="2" stroke-linejoin="round"/><path d="M20.5 14.5 V23" stroke="#CCA700" stroke-width="2"/><circle cx="20.5" cy="26.5" r="1.3" fill="#CCA700"/></svg>
<svg style="left:3145px;top:1480px" width="40" height="40"><path d="M9.5 17.5 L16 25 L32.5 10.5" fill="none" stroke="#CCCCCC" stroke-width="2"/></svg>
<svg style="left:3145px;top:1518px" width="40" height="40"><ellipse cx="21" cy="22" rx="8" ry="9" fill="none" stroke="#CCCCCC" stroke-width="2"/><path d="M16 13.5 a5 4.5 0 0 1 10 0" fill="none" stroke="#CCCCCC" stroke-width="2"/><path d="M18 19 l6 6 M24 19 l-6 6" stroke="#CCCCCC" stroke-width="1.8"/><path d="M8.5 22 h4.5 M29 22 h4.5 M10 12.5 l4 3 M32 12.5 l-4 3 M10 34 l4 -4 M32 34 l-4 -4" stroke="#CCCCCC" stroke-width="1.8"/></svg>
</body></html>
